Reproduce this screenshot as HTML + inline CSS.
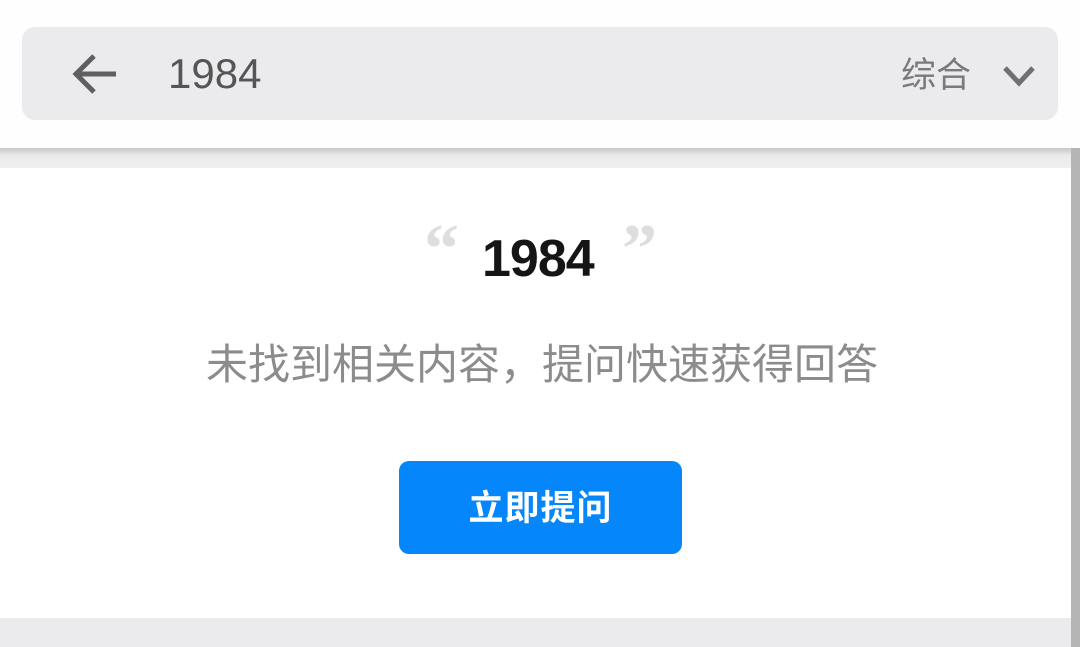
<!DOCTYPE html>
<html><head><meta charset="utf-8"><style>
body{margin:0;width:1080px;height:647px;overflow:hidden;background:#fff;font-family:"Liberation Sans","Noto Sans CJK SC",sans-serif;position:relative}
.hdr{position:absolute;left:0;top:0;width:1080px;height:148px;background:#fefefe;z-index:2}
.sb{position:absolute;left:22px;top:27px;width:1036px;height:93px;background:#ebeaed;border-radius:13px}
.shadow{position:absolute;left:0;top:148px;width:1080px;height:20px;background:linear-gradient(#c8c8c8,#ececec 40%,#efefef)}
.scroll{position:absolute;left:1071px;top:148px;width:9px;height:499px;background:#b5b5b5}
.foot{position:absolute;left:0;top:618px;width:1071px;height:29px;background:#ebebed}
.t{position:absolute;white-space:nowrap}
.btn{position:absolute;left:399px;top:461px;width:283px;height:93px;background:#0686fb;border-radius:10px;color:#fff;font-weight:bold;font-size:35px;text-align:center;line-height:90px;font-family:"Noto Sans CJK SC",sans-serif;letter-spacing:1px}
</style></head><body>
<div class="hdr">
<div class="sb">
<svg style="position:absolute;left:50px;top:26px" width="46" height="42" viewBox="0 0 46 42"><path d="M44 21H6M22 3L4 21l18 18" fill="none" stroke="#5f5f63" stroke-width="5"/></svg>
<div class="t" style="left:146px;top:23px;font-size:42px;color:#555;">1984</div>
<div class="t" style="left:879px;top:26px;font-size:35px;color:#7a7a7a;font-family:'Noto Sans CJK SC',sans-serif;line-height:40px">综合</div>
<svg style="position:absolute;left:980px;top:38px" width="34" height="22" viewBox="0 0 34 22"><path d="M3 3l14 15L31 3" fill="none" stroke="#707070" stroke-width="5"/></svg>
</div>
</div>
<div class="shadow"></div>
<div class="scroll"></div>
<div class="foot"></div>
<div class="t" style="left:424px;top:210px;font-size:70px;color:#dedede;font-family:'Liberation Serif',serif;font-weight:bold">“</div>
<div class="t" style="left:622px;top:210px;font-size:70px;color:#dedede;font-family:'Liberation Serif',serif;font-weight:bold">”</div>
<div class="t" style="left:482px;top:229px;font-size:52px;font-weight:bold;color:#151515;letter-spacing:-1px">1984</div>
<div class="t" style="left:206px;top:336px;font-size:42px;color:#8c8c8c;letter-spacing:0;font-family:'Noto Sans CJK SC',sans-serif;line-height:52px">未找到相关内容，提问快速获得回答</div>
<div class="btn">立即提问</div>
</body></html>
